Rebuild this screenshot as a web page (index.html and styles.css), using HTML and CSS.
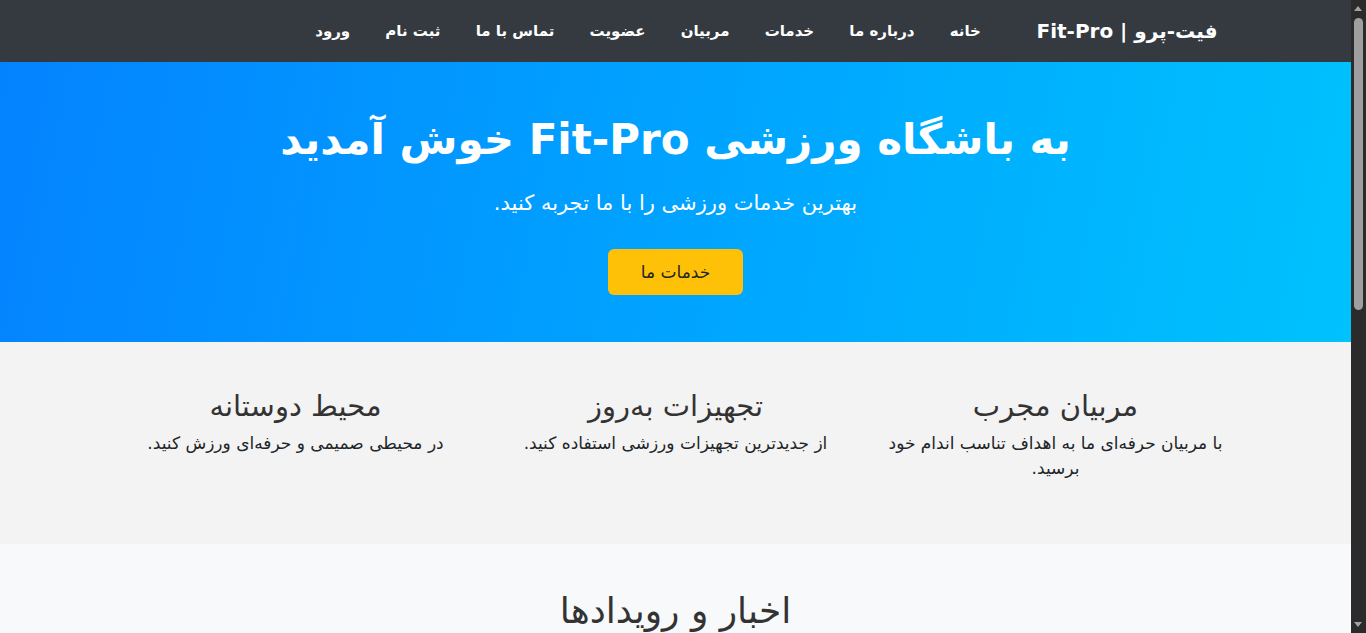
FILE: index.html
```html
<!DOCTYPE html>
<html lang="fa" dir="rtl">
<head>
<meta charset="utf-8">
<title>Fit-Pro</title>
<link rel="stylesheet" href="styles.css">
</head>
<body>
<div class="page">
  <nav class="navbar">
    <div class="container nav-inner">
      <a class="brand" href="#">فیت-پرو | Fit-Pro</a>
      <ul class="nav-links">
        <li><a href="#">خانه</a></li>
        <li><a href="#">درباره ما</a></li>
        <li><a href="#">خدمات</a></li>
        <li><a href="#">مربیان</a></li>
        <li><a href="#">عضویت</a></li>
        <li><a href="#">تماس با ما</a></li>
        <li><a href="#">ثبت نام</a></li>
        <li><a href="#">ورود</a></li>
      </ul>
    </div>
  </nav>
  <header class="hero">
    <h1 class="hero-title">به باشگاه ورزشی Fit-Pro خوش آمدید</h1>
    <p class="hero-sub">بهترین خدمات ورزشی را با ما تجربه کنید.</p>
    <a class="btn" href="#">خدمات ما</a>
  </header>
  <section class="features">
    <div class="container feature-grid">
      <div class="feature">
        <h3>مربیان مجرب</h3>
        <p>با مربیان حرفه‌ای ما به اهداف تناسب اندام خود برسید.</p>
      </div>
      <div class="feature">
        <h3>تجهیزات به‌روز</h3>
        <p>از جدیدترین تجهیزات ورزشی استفاده کنید.</p>
      </div>
      <div class="feature">
        <h3>محیط دوستانه</h3>
        <p>در محیطی صمیمی و حرفه‌ای ورزش کنید.</p>
      </div>
    </div>
  </section>
  <section class="news">
    <h2>اخبار و رویدادها</h2>
    <div class="news-space"></div>
  </section>
</div>
<div class="scrollbar" aria-hidden="true">
  <span class="sb-arrow sb-up"></span>
  <span class="sb-thumb"></span>
  <span class="sb-arrow sb-down"></span>
</div>
</body>
</html>
```
FILE: styles.css
```css
* { box-sizing: border-box; }
html, body { margin: 0; padding: 0; }
body {
  font-family: "DejaVu Sans", "Noto Sans", sans-serif;
  color: #212529;
  background: #fff;
  direction: rtl;
}
.page {
  margin-right: 15px;
}
.container {
  max-width: 1140px;
  margin: 0 auto;
  padding: 0 15px;
}
.navbar {
  background: #343a40;
  height: 62px;
}
.nav-inner {
  display: flex;
  align-items: center;
  height: 100%;
  padding-right: 28px;
}
.brand {
  color: #fff;
  text-decoration: none;
  font-weight: bold;
  font-size: 20px;
  margin-left: 38px;
}
.nav-links {
  display: flex;
  list-style: none;
  margin: 0;
  padding: 0;
}
.nav-links a {
  display: block;
  color: #fff;
  text-decoration: none;
  font-size: 15px;
  font-weight: bold;
  padding: 8px 17.6px;
}
.hero {
  background: linear-gradient(100deg, #0483ff 0%, #00a6ff 55%, #00c2fd 100%);
  height: 280px;
  color: #fff;
  display: flex;
  flex-direction: column;
  align-items: center;
  padding-top: 52px;
}
.hero-title {
  margin: 0;
  font-size: 42px;
  font-weight: bold;
  line-height: 52px;
}
.hero-sub {
  margin: 22px 0 0;
  font-size: 21px;
  line-height: 1.5;
}
.btn {
  display: block;
  margin-top: 29px;
  background: #ffc107;
  color: #212529;
  text-decoration: none;
  font-size: 17px;
  width: 135px;
  height: 46px;
  line-height: 46px;
  text-align: center;
  border-radius: 6px;
}
.features {
  background: #f3f3f3;
  height: 202px;
  padding-top: 47px;
}
.feature-grid {
  display: grid;
  grid-template-columns: repeat(3, 1fr);
  gap: 30px;
}
.feature {
  text-align: center;
}
.feature h3 {
  margin: 0 0 7px;
  font-size: 29px;
  line-height: 1.2;
  font-weight: normal;
  color: #333;
}
.feature p {
  margin: 0;
  font-size: 17px;
  line-height: 25px;
  color: #212529;
}
.news {
  background: #f8f9fa;
  text-align: center;
  padding-top: 45px;
}
.news h2 {
  margin: 0;
  font-size: 36px;
  line-height: 1.2;
  font-weight: normal;
  color: #333;
}
.news-space { height: 300px; }
.scrollbar {
  position: fixed;
  top: 0;
  right: 0;
  width: 15px;
  height: 100vh;
  background: #2b2b2b;
  direction: ltr;
}
.sb-thumb {
  position: absolute;
  top: 18px;
  left: 3px;
  width: 9px;
  height: 292px;
  background: #9f9f9f;
  border-radius: 5px;
}
.sb-arrow {
  position: absolute;
  left: 3px;
  width: 0;
  height: 0;
  border-left: 4.5px solid transparent;
  border-right: 4.5px solid transparent;
}
.sb-up {
  top: 6px;
  border-bottom: 5px solid #a3a3a3;
}
.sb-down {
  bottom: 6px;
  border-top: 5px solid #a3a3a3;
}
```
